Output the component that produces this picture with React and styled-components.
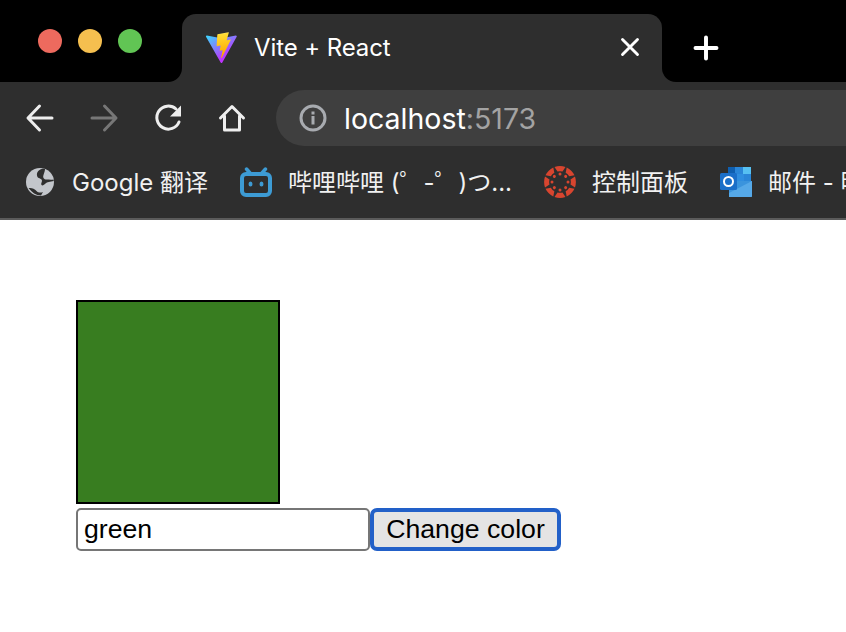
import React from "react";
import styled, { createGlobalStyle } from "styled-components";

const Global = createGlobalStyle`
  html, body { margin: 0; padding: 0; background: #fff; overflow: hidden; }
  body { font-family: "Liberation Sans", Arial, sans-serif; }
`;
const Window = styled.div`width: 846px; height: 632px; overflow: hidden; display: flex; flex-direction: column;`;
const TabStrip = styled.div`display: flex; height: 82px; flex: none; background: #2e2e2e;`;
const Traffic = styled.div`
  width: 182px; flex: none; background: #000; border-bottom-right-radius: 14px;
  display: flex; align-items: flex-start; gap: 16px; padding: 29px 0 0 38px; box-sizing: border-box;
`;
const Light = styled.span`width: 24px; height: 24px; border-radius: 50%; background: ${p => p.$c};`;
const TabSlot = styled.div`width: 480px; flex: none; background: #000; padding-top: 14px; box-sizing: border-box;`;
const Tab = styled.div`
  height: 68px; background: #2e2e2e; border-radius: 14px 14px 0 0; display: flex; align-items: center;
  padding: 0 20px 2px 22px; box-sizing: border-box; color: #fff;
  font: 400 24px "Inter", "Liberation Sans", sans-serif;
`;
const TabTitle = styled.span`margin-left: 15px; flex: 1; letter-spacing: -0.1px;`;
const StripRest = styled.div`flex: 1; background: #000; border-bottom-left-radius: 14px; display: flex; align-items: center; padding: 14px 0 0 30px; box-sizing: border-box;`;
const Toolbar = styled.div`height: 73px; flex: none; background: #2e2e2e; display: flex; align-items: flex-start; padding: 8px 0 0 24px; box-sizing: border-box;`;
const NavIcon = styled.div`width: 64px; height: 56px; flex: none; display: flex; align-items: center;`;
const Omnibox = styled.div`
  margin-left: -4px; flex: 1; height: 56px; margin-right: -40px; background: #3f3f3f; border-radius: 28px; display: flex; align-items: center;
  padding-left: 22px; gap: 16px; font: 400 28.5px "Inter", "Liberation Sans", sans-serif; color: #fff;
`;
const Port = styled.span`color: #a3a3a3;`;
const Bookmarks = styled.div`height: 63px; flex: none; background: #2e2e2e; display: flex; align-items: flex-start; padding: 0 0 0 26px; box-sizing: border-box; overflow: hidden;`;
const Bookmark = styled.div`
  flex: none; width: ${p => p.$w}px; height: 54px; display: flex; align-items: center; gap: ${p => p.$gap}px; white-space: nowrap; color: #f1f1f1;
  font: 400 24px "Inter", "Noto Sans CJK SC", sans-serif;
`;
const BookmarkLabel = styled.span`padding-bottom: 3px;`;
const Divider = styled.div`height: 2px; flex: none; background: #5b5b5b;`;
const Page = styled.main`flex: 1; padding: 80px 0 0 76px; background: #fff;`;
const Square = styled.div`width: 204px; height: 204px; box-sizing: border-box; border: 2px solid #000; background: #387d20; margin-bottom: 4px;`;
const Row = styled.div`display: flex; align-items: stretch; height: 43px;`;
const Field = styled.input`
  width: 294px; height: 43px; box-sizing: border-box; border: 2px solid #767676; border-radius: 5px; padding: 0 6px;
  background: #fff; color: #000; font: 400 26.67px "Liberation Sans", Arial, sans-serif; outline: none;
`;
const Button = styled.button`
  width: 191px; height: 43px; box-sizing: border-box; border: 4px solid #2260c8; border-radius: 7px; padding: 0; margin: 0;
  background: #e4e4e4; color: #000; font: 400 26.67px "Liberation Sans", Arial, sans-serif;
`;

const Line = ({ d, color = "#eee", w = 3, size = 32 }) => (
  <svg width={size} height={size} viewBox="0 0 32 32" fill="none" stroke={color} strokeWidth={w} strokeLinecap="round" strokeLinejoin="round"><path d={d} /></svg>
);
const ViteLogo = () => (
  <svg width="35" height="35" viewBox="0 0 32 32">
    <defs>
      <linearGradient id="va" x1="6" y1="4" x2="20" y2="24" gradientUnits="userSpaceOnUse"><stop stopColor="#41D1FF" /><stop offset="1" stopColor="#BD34FE" /></linearGradient>
      <linearGradient id="vb" x1="15.1" y1="2.5" x2="18" y2="22.4" gradientUnits="userSpaceOnUse"><stop stopColor="#FFEA83" /><stop offset=".08" stopColor="#FFDD35" /><stop offset="1" stopColor="#FFA800" /></linearGradient>
    </defs>
    <path fill="url(#va)" d="M29.883 6.146 16.622 29.86a.72.72 0 0 1-1.255.005L1.842 6.148a.72.72 0 0 1 .751-1.067l13.276 2.372a.72.72 0 0 0 .256 0l12.998-2.368a.72.72 0 0 1 .76 1.061Z" />
    <path fill="url(#vb)" d="M22.264 2.007 12.45 3.93a.36.36 0 0 0-.29.332l-.604 10.192a.36.36 0 0 0 .44.372l2.732-.63a.36.36 0 0 1 .434.423l-.812 3.975a.36.36 0 0 0 .457.417l1.687-.512a.36.36 0 0 1 .457.418l-1.29 6.24c-.08.39.44.604.657.269l.145-.223 7.994-15.953a.36.36 0 0 0-.39-.515l-2.811.542a.36.36 0 0 1-.415-.453l1.835-6.36a.36.36 0 0 0-.417-.454Z" />
  </svg>
);
const Reload = () => (
  <svg width="32" height="32" viewBox="-1.500 -0.500 32 32" fill="none">
    <path d="M25.5 19.5A11.500 11.500 0 1 1 22.5 6.500" stroke="#eee" strokeWidth="3" strokeLinecap="round" />
    <path d="M27.5 3v11H16.500z" fill="#eee" />
  </svg>
);
const Home = () => (
  <svg width="32" height="32" viewBox="0 0 32 32" fill="none" stroke="#eee" strokeWidth="3" strokeLinejoin="round" strokeLinecap="round">
    <path d="M4.500 16 16 4.500 27.500 16" /><path d="M8.500 14v14h15V14" />
  </svg>
);
const Info = () => (
  <svg width="30" height="30" viewBox="0 0 30 30" fill="none">
    <circle cx="15" cy="15" r="12" stroke="#a8abb0" strokeWidth="3" />
    <rect x="13.500" y="13" width="3" height="8.500" fill="#a8abb0" /><rect x="13.500" y="8.500" width="3" height="3" fill="#a8abb0" />
  </svg>
);
const Globe = () => (
  <svg width="28" height="28" viewBox="0 0 28 28">
    <circle cx="14" cy="14" r="14" fill="#c3c6cb" />
    <path d="M17 0.500 C13 1.500 10.500 4 11 7.500 C11.500 10.500 14 10 15.500 11.500 C17 13.500 14.500 15 15.500 17 C16.500 18 18 17 19.500 15.500 C21 14 24 13.500 27.800 13 L27.400 11.500 C25 12 22.500 11.500 20.500 11.500 C18 11.500 16.500 9.500 17.500 7 C18.300 4.500 19 2.500 19 1 Z" fill="#2e2e2e" />
    <path d="M2.500 20 C5.500 19.500 8.500 20.500 10.500 23 C12 24.800 15 25 17 24 L15 27.500 C10 27.500 6 24.500 2.500 20 Z" fill="#2e2e2e" />
  </svg>
);
const Bili = () => (
  <svg width="32" height="30" viewBox="0 0 32 30" fill="none">
    <rect x="2" y="7" width="28" height="21" rx="4" stroke="#3d9bd4" strokeWidth="4" />
    <path d="M10 6 6.500 2M22 6 25.500 2" stroke="#3d9bd4" strokeWidth="3.500" strokeLinecap="round" />
    <ellipse cx="10.500" cy="17" rx="2" ry="2.500" fill="#3d9bd4" /><ellipse cx="21.500" cy="17" rx="2" ry="2.500" fill="#3d9bd4" />
  </svg>
);
const Canvas = () => (
  <svg width="32" height="32" viewBox="-16 -16 32 32" fill="#d8452f">
    {[0, 45, 90, 135, 180, 225, 270, 315].map(a => (
      <g key={a} transform={`rotate(${a})`}>
        <path d="M-5.500 -15Q0 -16.800 5.500 -15L2.500 -10.500Q0 -11.200 -2.500 -10.500Z" />
        <circle cx="0" cy="-8" r="1.500" />
      </g>
    ))}
  </svg>
);
const Outlook = () => (
  <svg width="32" height="32" viewBox="0 0 32 32">
    <rect x="8" y="1" width="23" height="14" fill="#0f5fb0" />
    <rect x="15" y="1" width="8" height="7" fill="#2a86d8" /><rect x="23" y="1" width="8" height="7" fill="#56c0f2" />
    <rect x="8" y="8" width="8" height="7" fill="#1f72c4" /><rect x="16" y="8" width="8" height="7" fill="#2f8ee0" /><rect x="24" y="8" width="7" height="7" fill="#2a86d8" />
    <path d="M9 15 32 15V30a1 1 0 0 1-1 1H9Z" fill="#3a94dd" />
    <path d="M32 15 9 27V31H31a1 1 0 0 0 1-1Z" fill="#56a9e8" />
    <rect x="0" y="7" width="17" height="17" rx="1.500" fill="#1b6fc9" />
    <circle cx="8.500" cy="15.500" r="4.500" fill="none" stroke="#fff" strokeWidth="2" />
  </svg>
);

export default function App() {
  return (
    <Window>
      <Global />
      <TabStrip>
        <Traffic>
          <Light $c="#ed6a5e" /><Light $c="#f5bf4f" /><Light $c="#61c554" />
        </Traffic>
        <TabSlot>
          <Tab>
            <ViteLogo />
            <TabTitle>Vite + React</TabTitle>
            <Line d="M6 6 26 26M26 6 6 26" color="#fff" w={3.800} size={24} />
          </Tab>
        </TabSlot>
        <StripRest>
          <Line d="M16 4V28M4 16H28" color="#fff" w={4.500} size={28} />
        </StripRest>
      </TabStrip>
      <Toolbar>
        <NavIcon><Line d="M28 16H4.500M15.500 4 4 16 15.500 28" /></NavIcon>
        <NavIcon><Line d="M4 16H27.500M16.500 4 28 16 16.500 28" color="#777" /></NavIcon>
        <NavIcon><Reload /></NavIcon>
        <NavIcon><Home /></NavIcon>
        <Omnibox>
          <Info />
          <span>localhost<Port>:5173</Port></span>
        </Omnibox>
      </Toolbar>
      <Bookmarks>
        <Bookmark $w={214} $gap={18}><Globe /><BookmarkLabel>Google 翻译</BookmarkLabel></Bookmark>
        <Bookmark $w={304} $gap={16}><Bili /><BookmarkLabel>哔哩哔哩 (゜-゜)つ...</BookmarkLabel></Bookmark>
        <Bookmark $w={176} $gap={16}><Canvas /><BookmarkLabel>控制面板</BookmarkLabel></Bookmark>
        <Bookmark $w={200} $gap={16}><Outlook /><BookmarkLabel>邮件 - 明</BookmarkLabel></Bookmark>
      </Bookmarks>
      <Divider />
      <Page>
        <Square />
        <Row>
          <Field defaultValue="green" />
          <Button>Change color</Button>
        </Row>
      </Page>
    </Window>
  );
}
